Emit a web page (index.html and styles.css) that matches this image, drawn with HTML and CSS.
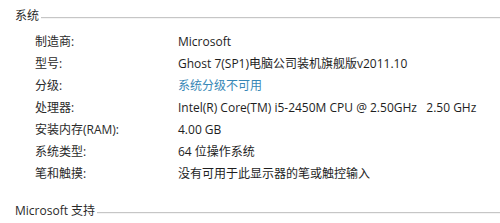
FILE: index.html
```html
<!DOCTYPE html>
<html>
<head>
<meta charset="utf-8">
<link rel="stylesheet" href="styles.css">
</head>
<body>
<div class="panel">
  <div class="section-head"><span class="title">系统</span><span class="rule"></span></div>
  <div class="rows">
    <div class="label">制造商:</div><div class="value">Microsoft</div>
    <div class="label">型号:</div><div class="value">Ghost 7(SP1)电脑公司装机旗舰版v2011.10</div>
    <div class="label">分级:</div><div class="value link">系统分级不可用</div>
    <div class="label">处理器:</div><div class="value">Intel(R) Core(TM) i5-2450M CPU @ 2.50GHz&nbsp;&nbsp;&nbsp;2.50 GHz</div>
    <div class="label">安装内存(RAM):</div><div class="value">4.00 GB</div>
    <div class="label">系统类型:</div><div class="value">64 位操作系统</div>
    <div class="label">笔和触摸:</div><div class="value">没有可用于此显示器的笔或触控输入</div>
  </div>
  <div class="section-head second"><span class="title">Microsoft 支持</span><span class="rule"></span></div>
</div>
</body>
</html>
```
FILE: styles.css
```css
html, body {
  margin: 0;
  padding: 0;
  background: #ffffff;
}
body {
  font-family: "Open Sans", "Noto Sans CJK SC", sans-serif;
  font-size: 12px;
  color: #1e1e1e;
}
.panel {
  width: 500px;
  height: 223px;
  overflow: hidden;
  padding-top: 5px;
  box-sizing: border-box;
}
.section-head {
  display: flex;
  align-items: center;
  padding-left: 15px;
  line-height: 22px;
  height: 22px;
}
.section-head .title {
  color: #2a2a2a;
  white-space: nowrap;
}
.section-head .rule {
  flex: 1;
  height: 1px;
  margin-left: 2px;
  margin-top: 3px;
  background: #c6c6c6;
  border-bottom: 1px solid #f4f4f4;
}
.section-head.second {
  margin-top: 15px;
}
.rows {
  margin-top: 4px;
  display: grid;
  grid-template-columns: 143px 1fr;
  padding-left: 35px;
  line-height: 22px;
}
.label {
  color: #2a2a2a;
  white-space: nowrap;
}
.value {
  white-space: nowrap;
}
.link {
  color: #3787b6;
}
```
